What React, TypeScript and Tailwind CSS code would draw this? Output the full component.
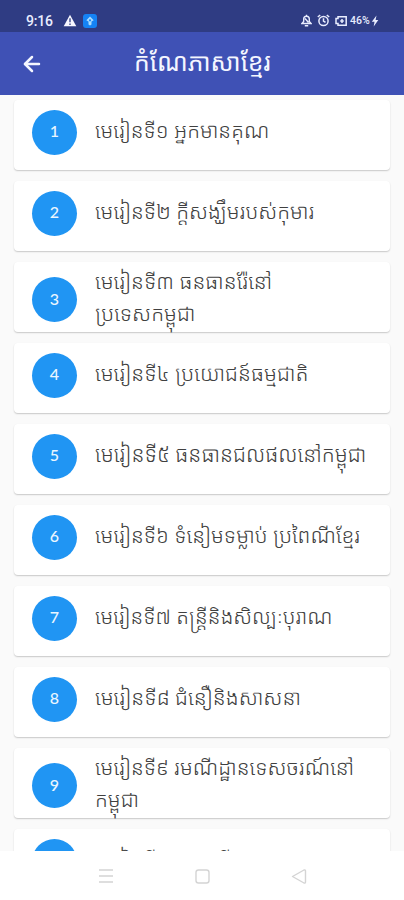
import React from 'react';
import { LuArrowLeft } from 'react-icons/lu';

type Lesson = { n: number; lines: string[]; size: string };

const lessons: Lesson[] = [
  { n: 1, lines: ['មេរៀនទី១ អ្នកមានគុណ'], size: 'text-[20.8px]' },
  { n: 2, lines: ['មេរៀនទី២ ក្ដីសង្ឃឹមរបស់កុមារ'], size: 'text-[20.9px]' },
  { n: 3, lines: ['មេរៀនទី៣ ធនធានរ៉ែនៅ', 'ប្រទេសកម្ពុជា'], size: 'text-[21px]' },
  { n: 4, lines: ['មេរៀនទី៤ ប្រយោជន៍ធម្មជាតិ'], size: 'text-[21.1px]' },
  { n: 5, lines: ['មេរៀនទី៥ ធនធានជលផលនៅកម្ពុជា'], size: 'text-[21.2px]' },
  { n: 6, lines: ['មេរៀនទី៦ ទំនៀមទម្លាប់ ប្រពៃណីខ្មែរ'], size: 'text-[20.9px]' },
  { n: 7, lines: ['មេរៀនទី៧ តន្ត្រីនិងសិល្បៈបុរាណ'], size: 'text-[20.7px]' },
  { n: 8, lines: ['មេរៀនទី៨ ជំនឿនិងសាសនា'], size: 'text-[21.1px]' },
  { n: 9, lines: ['មេរៀនទី៩ រមណីដ្ឋានទេសចរណ៍នៅ', 'កម្ពុជា'], size: 'text-[20.9px]' },
  { n: 10, lines: ['មេរៀនទី១០ សារពីងារ'], size: 'text-[21px]' },
];

function StatusBar() {
  return (
    <div className="flex h-8 shrink-0 items-center bg-[#2f3c83] pt-[9px] pl-[26px] text-[#e9edff]">
      <span className="w-[28px] font-['Roboto'] text-[14px] leading-4 font-medium tracking-[-0.2px] whitespace-nowrap">9:16</span>
      <svg className="ml-[9px]" width="14" height="13" viewBox="0 0 14 13">
        <path d="M7 .8 13.3 12.3H.7Z" fill="#f7f7ff" />
        <path d="M7 4.3v4M7 9.4v1.5" stroke="#2f3c83" strokeWidth="1.3" />
      </svg>
      <svg className="ml-[6px]" width="14" height="14" viewBox="0 0 14 14">
        <rect width="14" height="14" rx="3" fill="#1583f5" />
        <path d="M7 2.500 10.700 6.200 8.500 7.500v3L7 11.500l-1.500-1v-3L3.300 6.200Z" fill="#a9dcff" />
        <circle cx="7" cy="6.3" r="1.1" fill="#1583f5" />
      </svg>
      <svg className="ml-[204px]" width="11" height="13" viewBox="0 0 11 13" fill="none" stroke="currentColor" strokeWidth="1.4">
        <path d="M1 9.500h9L8.300 7.500V5a2.800 2.800 0 0 0-5.600 0v2.500ZM5.500 2V.800M3.800 11.700h3.400M4 4.500l3.500 4" />
      </svg>
      <svg className="ml-[5px]" width="13" height="13" viewBox="0 0 13 13" fill="none" stroke="currentColor" strokeWidth="1.5">
        <circle cx="6.5" cy="7" r="4.6" />
        <path d="M6.5 4.3V7l2 1.3M.8 3 3.2 1M12.2 3 9.8 1" />
      </svg>
      <svg className="ml-[5px]" width="12" height="10" viewBox="0 0 12 10" fill="none" stroke="currentColor" strokeWidth="1.5">
        <path d="M3 .8h8.2v8.4H3V7.500H1v-5h2ZM7 3v4M5.200 5h3.600" />
      </svg>
      <span className="ml-[3px] w-[20px] font-['Roboto'] text-[10.5px] leading-4 font-medium whitespace-nowrap">46%</span>
      <svg className="ml-px" width="8" height="12" viewBox="0 0 8 12">
        <path d="M5.5.5.8 6.8h2.7L2.7 11.5 7.3 5H4.6Z" fill="currentColor" />
      </svg>
    </div>
  );
}

function LessonCard({ lesson }: { lesson: Lesson }) {
  const double = lesson.lines.length > 1;
  return (
    <div className="flex h-[70px] shrink-0 rounded-[4px] bg-white pl-[18px] shadow-[0_1px_1.5px_rgba(0,0,0,0.2)]">
      <div
        className={`flex size-[45px] shrink-0 items-center justify-center rounded-full bg-[#2095f3] pb-[2px] font-['Lato'] text-[16px] font-medium text-[#eaf6ff] ${double ? 'mt-[15px]' : 'mt-[9.5px]'}`}
      >
        {lesson.n}
      </div>
      <div
        className={`ml-[18px] font-['Noto_Sans_Khmer','Khmer_OS','Noto_Sans',sans-serif] font-light text-[#404040] ${lesson.size} ${double ? 'mt-[3px]' : 'mt-[14px]'}`}
      >
        {lesson.lines.map((line) => (
          <div key={line} className="h-8 leading-8 whitespace-nowrap">
            <span>{line}</span>
          </div>
        ))}
      </div>
    </div>
  );
}

export default function App() {
  return (
    <div className="flex h-[900px] w-[404px] flex-col overflow-hidden bg-[#fafafa]">
      <StatusBar />
      <header className="flex h-[63px] shrink-0 items-center bg-[#3f51b5] pl-[20px] text-[#f4f6ff]">
        <LuArrowLeft size={24} strokeWidth={2.5} />
        <h1 className="-mt-1.5 ml-[90px] font-['Noto_Sans_Khmer','Khmer_OS','Noto_Sans',sans-serif] text-[24.8px] leading-9 whitespace-nowrap">កំណែភាសាខ្មែរ</h1>
      </header>
      <main className="flex h-[756px] shrink-0 flex-col gap-[11px] overflow-hidden px-[14px] pt-[5px]">
        {lessons.map((l) => (
          <LessonCard key={l.n} lesson={l} />
        ))}
      </main>
      <nav className="flex h-[49px] shrink-0 items-center bg-white pl-[98px]">
        <svg width="210" height="18" viewBox="0 0 210 18" fill="none" stroke="#d4d4d4" strokeWidth="1.4">
          <path d="M1 3h14M1 9h14M1 15h14" />
          <rect x="98" y="3" width="13" height="13" rx="2.5" />
          <path d="M194.500 9.500 206 3q1.500-.400 1.500 1v11q0 1.500-1.500 1Z" strokeLinejoin="round" />
        </svg>
      </nav>
    </div>
  );
}
